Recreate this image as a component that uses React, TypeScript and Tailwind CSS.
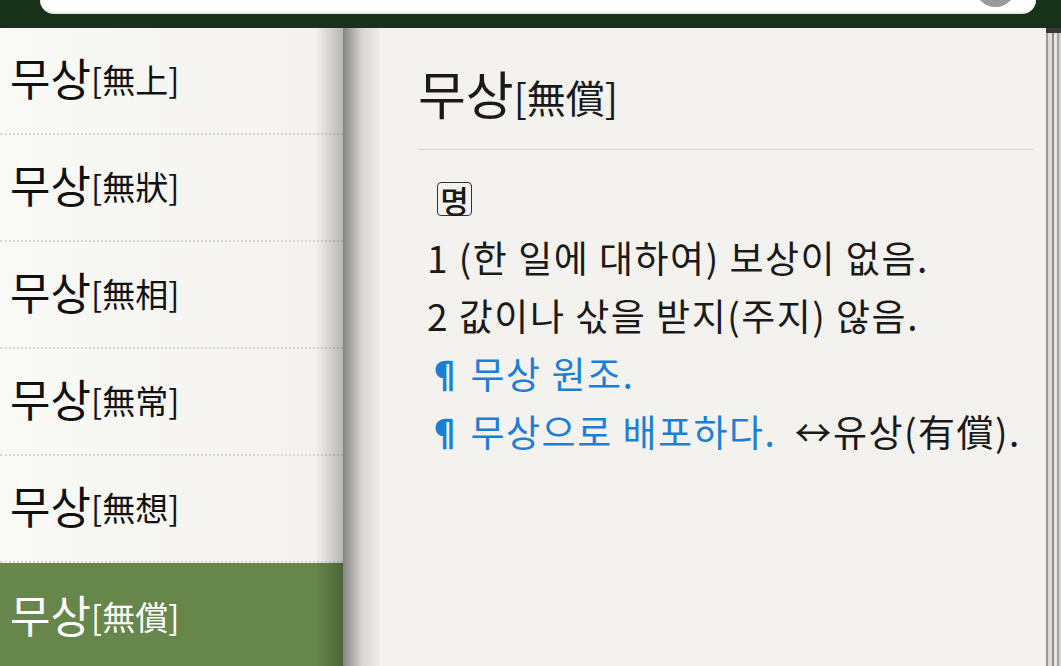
import React from "react";

const entries = [
  { word: "무상", hanja: "無上" },
  { word: "무상", hanja: "無狀" },
  { word: "무상", hanja: "無相" },
  { word: "무상", hanja: "無常" },
  { word: "무상", hanja: "無想" },
  { word: "무상", hanja: "無償", active: true },
];

const font = { fontFamily: '"Noto Sans CJK KR", "Noto Sans", sans-serif' };

export default function App() {
  return (
    <div className="flex h-[666px] w-[1061px] flex-col overflow-hidden bg-[#17311a]" style={font}>
      {/* top bar with search field */}
      <div className="relative h-[28px] shrink-0 bg-[#17311a] px-[40px]">
        <div className="relative h-[14px] w-[996px] overflow-hidden rounded-b-[16px] border-b-2 border-[#e3ebe3] bg-white">
          <div className="absolute left-[935px] top-[-34px] h-[41px] w-[41px] rounded-full bg-[#9a9a9a]" />
        </div>
      </div>

      <div className="flex min-h-0 flex-1">
        {/* word list */}
        <div className="relative w-[343px] shrink-0 bg-gradient-to-r from-[#f9f9f6] to-[#f3f2ee]">
          <div className="flex flex-col">
            {entries.map((e, i) => (
              <div
                key={i}
                className={
                  e.active
                    ? "flex h-[107px] items-center bg-[#66864b] pb-[6px] pl-[10px] text-white"
                    : "flex h-[107px] items-center border-b-2 border-dotted border-[#d6d6d2] pb-[8px] pl-[10px] text-[#111]"
                }
              >
                <span className="text-[44px] leading-none">{e.word}</span>
                <span className="mt-[6px] text-[33px] leading-none">[{e.hanja}]</span>
              </div>
            ))}
          </div>
          <div className="pointer-events-none absolute inset-y-0 right-0 w-[28px] bg-gradient-to-r from-transparent to-black/25" />
        </div>

        {/* shadow gutter */}
        <div className="w-[37px] shrink-0 bg-gradient-to-r from-[#858583] via-[#d6d5d1] to-[#eeede9]" />

        {/* definition pane */}
        <div className="w-[666px] shrink-0 bg-[#f3f2ee] pl-[38px] pr-[13px] text-[#1a1a1a]">
          <div className="flex h-[122px] items-center border-b border-[#d8d7d3] pt-[8px]">
            <span className="text-[52px] leading-none">무상</span>
            <span className="mt-[8px] text-[39px] leading-none">[無償]</span>
          </div>
          <div className="pl-[9px] pt-[31px] text-[37px] leading-[58px] tracking-[1.5px]">
            <div className="flex h-[36px] items-center pl-[10px]">
              <span className="flex h-[34px] w-[35px] items-center justify-center rounded-[4px] border border-[#333] text-[31px] font-medium leading-none tracking-normal">
                명
              </span>
            </div>
            <div className="mt-[11px]">1 (한 일에 대하여) 보상이 없음.</div>
            <div>2 값이나 삯을 받지(주지) 않음.</div>
            <div className="flex items-center text-[#1b7fd6]">
              <span className="mr-[6px] text-[36px] font-bold">¶</span>
              <span>무상 원조.</span>
            </div>
            <div className="flex items-center">
              <span className="mr-[6px] text-[36px] font-bold text-[#1b7fd6]">¶</span>
              <span className="text-[#1b7fd6]">무상으로 배포하다.</span>
              <span className="ml-[18px]">↔유상(有償).</span>
            </div>
          </div>
        </div>

        {/* stacked page edges */}
        <div className="flex flex-1 flex-col">
          <div className="h-[5px] bg-[#3a3a36]" />
          <div className="flex flex-1">
            <div className="w-[2px] bg-[#9c9b98]" />
            <div className="w-[4px] bg-[#dedcd8]" />
            <div className="w-[2px] bg-[#8f8e8b]" />
            <div className="w-[3px] bg-[#e9e8e4]" />
            <div className="w-[2px] bg-[#a3a29f]" />
            <div className="flex-1 bg-[#d4d3cf]" />
          </div>
        </div>
      </div>
    </div>
  );
}
